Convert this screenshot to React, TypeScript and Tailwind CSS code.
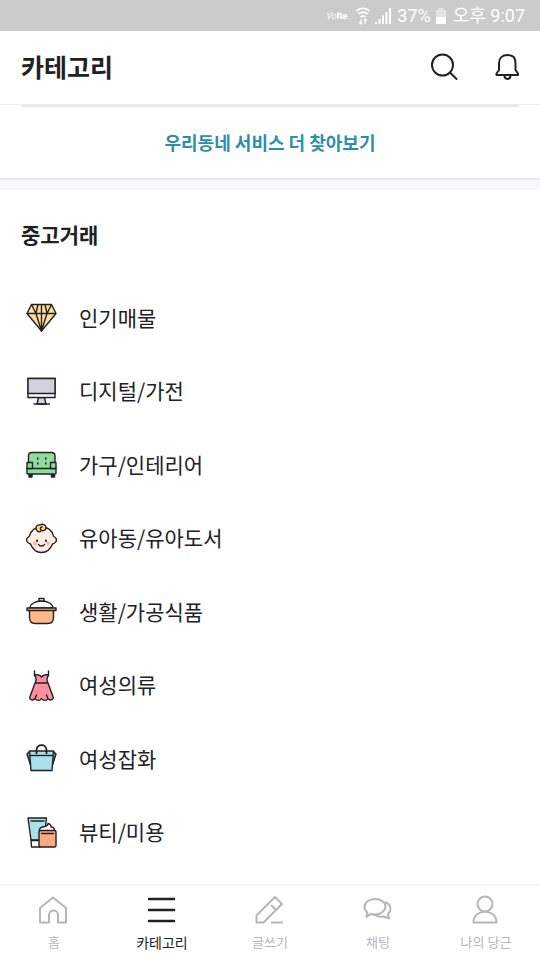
import type { ReactNode } from "react";

const ink = "#212124";

function DiamondIcon() {
  return (
    <g strokeLinejoin="round">
      <path d="M6.500 2.500h20l4.500 9L16.500 29 2 11.500z" fill="#ffe09a" />
      <path d="M2 11.500h29M16.500 2.500V29M11 11.500l5.500 17.500L22 11.500M6.500 2.500l4.500 9M26.500 2.500l-4.500 9M11 11.500l2-9M22 11.500l-2-9" fill="none" />
    </g>
  );
}

function MonitorIcon() {
  return (
    <g>
      <path d="M13.500 21.500h6l1.500 6.500h-9z" fill="#cfd2dc" />
      <path d="M3 2.500h27v19H3z" fill="#fff" />
      <path d="M3 2.500h27v15H3z" fill="#cfd2dc" />
      <path d="M8.500 28H25" fill="none" />
    </g>
  );
}

function SofaIcon() {
  return (
    <g strokeLinejoin="round">
      <path d="M4 25h3v3H4zM26.500 25h3v3h-3z" fill={ink} />
      <path d="M3.500 14V7Q3.500 3.500 7 3.500h19.500Q30 3.500 30 7v7" fill="#8fdc9e" />
      <path d="M6 19.500h21V12H6z" fill="#8fdc9e" stroke="none" />
      <path d="M2 19.500h29V24q0 1-1 1H3q-1 0-1-1z" fill="#8fdc9e" />
      <path d="M2 13.500h5.500v6H2zM25.500 13.500H31v6h-5.500z" fill="#8fdc9e" />
      <path d="M12 9.500h1.500M20 9.500h1.500M12 14.500h1.500M20 14.500h1.500" strokeWidth="1.800" />
    </g>
  );
}

function BabyIcon() {
  return (
    <g strokeLinecap="round" strokeLinejoin="round">
      <path d="M16.500 4C10.500 4 6 7.500 4.500 13c-1.500 1-3 2.500-3 4s2 3.500 4 4c2 5 6 8.500 11 8.500s9-3.500 11-8.500c2-.500 4-2.500 4-4s-1.500-3-3-4C27 7.500 22.500 4 16.500 4z" fill="#fdeee4" />
      <path d="M15.500 8.500c-2.500 1-4.500-1-4.500-3.500 0-2 2-3.500 4-3C17.500.500 21 1.500 21 4.500c0 3-3.500 4-5 2.500-1.500-1.500 0-3 1-3" fill="#ffd978" />
      <circle cx="10" cy="20.500" r="2" fill="#ffb8a0" stroke="none" />
      <circle cx="23" cy="20.500" r="2" fill="#ffb8a0" stroke="none" />
      <path d="M12 17.500v.500M21 17.500v.500" strokeWidth="2" />
      <path d="M13.500 21.500c1 2 5 2 6 0" fill="none" />
    </g>
  );
}

function PotIcon() {
  return (
    <g strokeLinejoin="round">
      <path d="M5 12c0-4 5-7 11.500-7S28 8 28 12z" fill="#fff" />
      <path d="M14 2.500h5V5h-5z" fill="#fff" />
      <path d="M4.500 14h24v7.500q0 6-6 6h-12q-6 0-6-6z" fill="#ffb886" />
      <path d="M4.500 12H2v2.500h29V12z" fill="#ffb886" />
    </g>
  );
}

function DressIcon() {
  return (
    <g strokeLinecap="round" strokeLinejoin="round">
      <path d="M9.500 1v4.500c2 2.500 2 5 .500 7.500L4.500 28c1.500 2.500 4 2.500 5.500.500 1.500 2.500 5 2.500 6.500 0 1.500 2.500 5 2.500 6.500 0 1.500 2 4 2 5.500-.500L23 13c-1.500-2.500-1.500-5 .500-7.500V1v3.500c-3 0-5.500.500-7 2.500C15 5 12.500 4.500 9.500 4.500" fill="#ff8f9f" />
      <path d="M10.500 13h12M11.500 25l-1 2.500M21.500 25l1 2.500" fill="none" />
    </g>
  );
}

function BagIcon() {
  return (
    <g strokeLinejoin="round">
      <path d="M4.500 8.500 2 11l3.500 11M28.500 8.500 31 11l-3.500 11" fill="#70b3bf" />
      <path d="M4.500 8h24L27 27.500H6z" fill="#a9e1ea" />
      <path d="M5 12.500h23" fill="none" />
      <path d="M11.500 11V7c0-6.500 10-6.500 10 0v4" fill="none" strokeWidth="1.800" />
    </g>
  );
}

function BeautyIcon() {
  return (
    <g strokeLinecap="round" strokeLinejoin="round">
      <path d="M3 1h18.500L19 23H6z" fill="#a9e1ea" />
      <path d="M6 23.500h9v6.500H6.500z" fill="#fff" />
      <path d="M6 4h13" fill="none" />
      <path d="M14.500 14c-1-3 2-4 5.500-4.500 2-.500 3-2 3-3 2 .500 3.500 2 3 3.500 3 0 4 2 3 4z" fill="#fff" />
      <rect x="14" y="13.500" width="17" height="16.500" rx="1.500" fill="#ffaa7e" />
      <path d="M16.500 16.500h12" fill="none" />
    </g>
  );
}

const categories: { name: string; icon: ReactNode }[] = [
  { name: "인기매물", icon: <DiamondIcon /> },
  { name: "디지털/가전", icon: <MonitorIcon /> },
  { name: "가구/인테리어", icon: <SofaIcon /> },
  { name: "유아동/유아도서", icon: <BabyIcon /> },
  { name: "생활/가공식품", icon: <PotIcon /> },
  { name: "여성의류", icon: <DressIcon /> },
  { name: "여성잡화", icon: <BagIcon /> },
  { name: "뷰티/미용", icon: <BeautyIcon /> },
];

const tabs: { name: string; active?: boolean; icon: ReactNode }[] = [
  { name: "홈", icon: <path d="M2 13 15 2.500 28 13v14.500h-8V20c0-6-9-6-9 0v7.500H2z" /> },
  { name: "카테고리", active: true, icon: <path d="M3 4h25M3 15h25M3 26h25" strokeLinecap="round" strokeWidth="2.500" /> },
  { name: "글쓰기", icon: <path d="M21 2l7 7L9.500 27.500h-7v-7zM17 10l5 5M17 27.500h12" /> },
  {
    name: "채팅",
    icon: (
      <>
        <path d="M13 4c6 0 10.500 3.500 10.500 7.500s-4.500 8-10.500 8c-1.500 0-3 0-4.500-.500L4.500 22l1-4.500C3.500 16 2.500 14 2.500 12 2.500 7.500 7 4 13 4z" />
        <path d="M23 7c3.500 1.500 5.500 4 5.500 7 0 2-1 3.500-2.500 5l1 4.500-5.500-2c-4 .500-7 0-9.500-2" />
      </>
    ),
  },
  {
    name: "나의 당근",
    icon: (
      <>
        <circle cx="15" cy="9" r="7.500" />
        <path d="M3.500 27.500c0-14.500 23-14.500 23 0z" />
      </>
    ),
  },
];

function StatusBar() {
  return (
    <div className="flex h-[31px] shrink-0 items-center justify-end bg-[#cbcbcb] pr-[15px] font-[Roboto,'Noto_Sans_CJK_KR',sans-serif] text-white">
      <span className="mr-2 flex items-center text-[9px] leading-4 font-black">
        <i className="font-normal">Vo</i>lte
      </span>
      <svg className="mr-1 h-5 w-4" viewBox="0 0 16 20" fill="none" stroke="currentColor" strokeWidth="1.800">
        <path d="M1.500 5c4-3.500 9-3.500 13 0M3.500 8c3-2.500 6-2.500 9 0M5.500 11c2-1.500 3-1.500 5 0" />
        <path d="M6 13v5M10 18v-5M4 16l2 2 1-1M9 14l1-1 2 2" strokeWidth="1.200" />
      </svg>
      <svg className="mr-1.5 h-4 w-4" viewBox="0 0 16 16" fill="currentColor">
        <path d="M0 14h2v2H0zM3.500 11h2v5h-2zM7 7.500h2V16H7zM10.500 4h2v12h-2zM14 0h2v16h-2z" />
      </svg>
      <span className="text-lg">37%</span>
      <svg className="mr-1.5 ml-1 h-4 w-3" viewBox="0 0 12 16">
        <path d="M3.500 0h5v2H11v14H1V2h2.500z" fill="#e4e4e4" />
        <path d="M1 9h10v7H1z" fill="#fff" />
      </svg>
      <span className="text-lg">오후 9:07</span>
    </div>
  );
}

export default function App() {
  return (
    <div className="flex min-h-screen flex-col bg-white font-['Noto_Sans_CJK_KR',sans-serif] text-[#212124]">
      <StatusBar />
      <header className="flex h-[74px] shrink-0 items-center justify-between border-b border-[#ececec] px-[21px] pb-[3px]">
        <h1 className="text-[25px] leading-9 font-bold">카테고리</h1>
        <div className="flex items-center gap-9">
          <button type="button" aria-label="검색">
            <svg className="size-8" viewBox="0 0 32 32" fill="none" stroke="currentColor" strokeWidth="2" strokeLinecap="round">
              <circle cx="15.500" cy="15" r="10.500" />
              <path d="m23 22.500 6.500 6.500" />
            </svg>
          </button>
          <button type="button" aria-label="알림">
            <svg className="h-8 w-6" viewBox="0 0 24 32" fill="none" stroke="currentColor" strokeWidth="2" strokeLinejoin="round">
              <path d="M1.500 25v-1.500L4 20v-7c0-5 3.500-8 8.500-8s8 3 8 8v7l2.500 3.500V25z" />
              <path d="M9.500 25.500c0 4.500 6 4.500 6 0" />
            </svg>
          </button>
        </div>
      </header>
      <main className="flex flex-1 flex-col">
        <section className="border-b-2 border-[#e9eaeb]">
          <div className="mx-[21px] h-0.5 bg-[#e8e8e8]" />
          <a href="#services" className="block pt-[21px] pb-[22px] text-center text-[18px] leading-7 font-bold text-[#2d8fa5]">
            우리동네 서비스 더 찾아보기
          </a>
        </section>
        <div className="h-[10px] bg-[#f7f8fa]" />
        <section className="flex flex-1 flex-col pb-4">
          <h2 className="px-[21px] pt-[29px] pb-[31px] text-[21px] leading-[30px] font-bold">중고거래</h2>
          <ul className="grid flex-1 auto-rows-fr">
            {categories.map(({ name, icon }) => (
              <li key={name} className="flex">
                <a href={`#${name}`} className="flex flex-1 items-center gap-[21px] px-[25px] text-[21px] leading-8">
                  <svg className="mt-1 size-[33px]" viewBox="0 0 33 33" stroke={ink} strokeWidth="1.400" aria-hidden="true">
                    {icon}
                  </svg>
                  {name}
                </a>
              </li>
            ))}
          </ul>
        </section>
      </main>
      <nav className="sticky bottom-0 grid h-[76px] shrink-0 grid-cols-5 border-t-2 border-[#f5f5f6] bg-white">
        {tabs.map(({ name, active, icon }) => (
          <a
            key={name}
            href={`#${name}`}
            className={`flex flex-col items-center gap-[5px] pt-[9px] ${active ? "text-[#212124]" : "text-[#b4b7ba]"}`}
          >
            <svg className="size-8" viewBox="0 0 32 32" fill="none" stroke="currentColor" strokeWidth="2" strokeLinejoin="round" aria-hidden="true">
              {icon}
            </svg>
            <span className={active ? "text-[14px] leading-5" : "text-[13px] leading-5"}>{name}</span>
          </a>
        ))}
      </nav>
    </div>
  );
}
